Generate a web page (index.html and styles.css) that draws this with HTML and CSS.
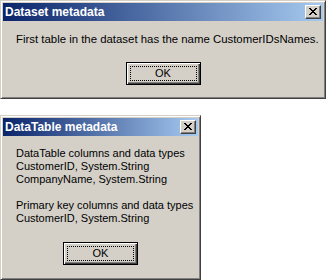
FILE: index.html
```html
<!DOCTYPE html>
<html lang="en">

<head>
    <meta charset="UTF-8">
    <meta name="viewport" content="width=device-width, initial-scale=1.0">
    <title>Metadata dialogs</title>
    <link rel="stylesheet" href="styles.css">
</head>

<body>
    <!-- Dataset dialog -->
    <div class="dialog dialog-wide">
        <div class="title-bar">
            <span class="title">Dataset metadata</span>
            <div class="close-btn">
                <svg width="8" height="7" viewBox="0 0 8 7">
                    <path d="M0 0h2v1h-2zM6 0h2v1h-2zM1 1h2v1h-2zM5 1h2v1h-2zM2 2h4v1h-4zM3 3h2v1h-2zM2 4h4v1h-4zM1 5h2v1h-2zM5 5h2v1h-2zM0 6h2v1h-2zM6 6h2v1h-2z" fill="#000"/>
                </svg>
            </div>
        </div>
        <div class="message message-single">
            <p>First table in the dataset has the name CustomerIDsNames.</p>
        </div>
        <div class="buttons buttons-single">
            <button class="ok-btn"><span>OK</span></button>
        </div>
    </div>

    <!-- DataTable dialog -->
    <div class="dialog dialog-narrow">
        <div class="title-bar">
            <span class="title">DataTable metadata</span>
            <div class="close-btn">
                <svg width="8" height="7" viewBox="0 0 8 7">
                    <path d="M0 0h2v1h-2zM6 0h2v1h-2zM1 1h2v1h-2zM5 1h2v1h-2zM2 2h4v1h-4zM3 3h2v1h-2zM2 4h4v1h-4zM1 5h2v1h-2zM5 5h2v1h-2zM0 6h2v1h-2zM6 6h2v1h-2z" fill="#000"/>
                </svg>
            </div>
        </div>
        <div class="message">
            <p>DataTable columns and data types</p>
            <p>CustomerID, System.String</p>
            <p>CompanyName, System.String</p>
            <p>&nbsp;</p>
            <p>Primary key columns and data types</p>
            <p>CustomerID, System.String</p>
        </div>
        <div class="buttons">
            <button class="ok-btn"><span>OK</span></button>
        </div>
    </div>
</body>

</html>
```

FILE: styles.css
```css
body {
    margin: 0;
    background-color: #fff;
    font-family: "Liberation Sans", Arial, sans-serif;
    font-size: 11px;
    color: #000;
}

.dialog {
    box-sizing: border-box;
    background-color: #d4d0c8;
    border: 1px solid;
    border-color: #d4d0c8 #404040 #404040 #d4d0c8;
    box-shadow: inset 1px 1px #fff, inset -1px -1px #808080;
    padding: 2px;
    display: flex;
    flex-direction: column;
}

.dialog-wide {
    width: 326px;
    height: 99px;
    margin-bottom: 16px;
}

.dialog-narrow {
    width: 201px;
    height: 165px;
}

.title-bar {
    height: 18px;
    display: flex;
    align-items: center;
    justify-content: space-between;
    padding: 0 2px 0 2px;
    background: linear-gradient(to right, #0a246a, #a6caf0);
}

.title {
    color: #fff;
    font-weight: bold;
    font-size: 12px;
}

.close-btn {
    box-sizing: border-box;
    width: 16px;
    height: 14px;
    background-color: #d4d0c8;
    border: 1px solid;
    border-color: #fff #404040 #404040 #fff;
    box-shadow: inset -1px -1px #808080;
    display: flex;
    align-items: center;
    justify-content: center;
    padding: 0 1px 1px 0;
}

.close-btn svg {
    display: block;
}

.message {
    padding: 11px 0 0 13px;
}

.message p {
    margin: 0;
    line-height: 13px;
    white-space: nowrap;
}

.message-single {
    padding-top: 12px;
    font-size: 11.4px;
}

.buttons {
    display: flex;
    justify-content: center;
    padding-top: 17px;
}

.buttons-single {
    padding-top: 16px;
}

.ok-btn {
    box-sizing: border-box;
    width: 75px;
    height: 23px;
    padding: 0;
    margin: 0;
    font: inherit;
    color: #000;
    background-color: #d4d0c8;
    border: 1px solid #000;
    box-shadow: inset 1px 1px #fff, inset -1px -1px #404040, inset -2px -2px #808080;
    display: flex;
    align-items: stretch;
    justify-content: stretch;
}

.ok-btn span {
    flex: 1;
    margin: 3px;
    border: 1px dotted #000;
    display: flex;
    align-items: center;
    justify-content: center;
    line-height: 13px;
}
```
